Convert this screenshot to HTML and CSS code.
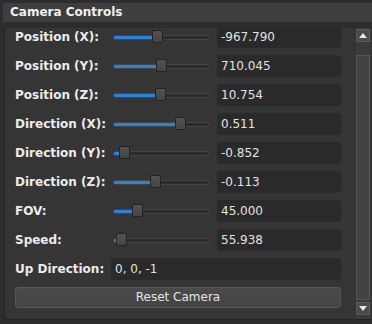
FILE: index.html
```html
<!DOCTYPE html>
<html>
<head>
<meta charset="utf-8">
<link rel="stylesheet" href="styles.css">
</head>
<body>
<div class="dock">
  <div class="title">Camera Controls</div>
  <div class="frame">
    <div class="viewport">
      <div class="content">
        <div class="row">
          <div class="label">Position (X):</div>
          <div class="slider"><div class="groove"><div class="fill" style="width:44px"></div></div><div class="handle" style="left:41px"></div></div>
          <div class="field">-967.790</div>
        </div>
        <div class="row">
          <div class="label">Position (Y):</div>
          <div class="slider"><div class="groove"><div class="fill" style="width:48px"></div></div><div class="handle" style="left:45px"></div></div>
          <div class="field">710.045</div>
        </div>
        <div class="row">
          <div class="label">Position (Z):</div>
          <div class="slider"><div class="groove"><div class="fill" style="width:47px"></div></div><div class="handle" style="left:44px"></div></div>
          <div class="field">10.754</div>
        </div>
        <div class="row">
          <div class="label">Direction (X):</div>
          <div class="slider"><div class="groove"><div class="fill" style="width:67px"></div></div><div class="handle" style="left:64px"></div></div>
          <div class="field">0.511</div>
        </div>
        <div class="row">
          <div class="label">Direction (Y):</div>
          <div class="slider"><div class="groove"><div class="fill" style="width:11px"></div></div><div class="handle" style="left:8px"></div></div>
          <div class="field">-0.852</div>
        </div>
        <div class="row">
          <div class="label">Direction (Z):</div>
          <div class="slider"><div class="groove"><div class="fill" style="width:42px"></div></div><div class="handle" style="left:39px"></div></div>
          <div class="field">-0.113</div>
        </div>
        <div class="row">
          <div class="label">FOV:</div>
          <div class="slider"><div class="groove"><div class="fill" style="width:24px"></div></div><div class="handle" style="left:21px"></div></div>
          <div class="field">45.000</div>
        </div>
        <div class="row">
          <div class="label">Speed:</div>
          <div class="slider"><div class="groove"><div class="fill" style="width:8px"></div></div><div class="handle" style="left:5px"></div></div>
          <div class="field">55.938</div>
        </div>
        <div class="row">
          <div class="label">Up Direction:</div>
          <div class="field wide">0, 0, -1</div>
        </div>
        <div class="button">Reset Camera</div>
      </div>
    </div>
    <div class="scrollbar">
      <div class="sb-btn"><svg width="8" height="5" viewBox="0 0 8 5"><path d="M0 5 L4 0 L8 5 Z" fill="#e8e8e8"/></svg></div>
      <div class="sb-track"><div class="sb-handle"></div></div>
      <div class="sb-btn"><svg width="8" height="5" viewBox="0 0 8 5"><path d="M0 0 L4 5 L8 0 Z" fill="#e8e8e8"/></svg></div>
    </div>
  </div>
</div>
</body>
</html>
```

FILE: styles.css
```css
html, body {
  margin: 0;
  padding: 0;
}
body {
  background: #2d2d2d;
  width: 372px;
  height: 324px;
  overflow: hidden;
  font-family: "DejaVu Sans", sans-serif;
  font-size: 12px;
  color: #e8e8e8;
}
.dock {
  padding-top: 3px;
  display: flex;
  flex-direction: column;
}
.title {
  margin-left: 3px;
  height: 19px;
  line-height: 19px;
  background: #3e3e3e;
  padding-left: 7px;
  font-weight: bold;
  color: #f0f0f0;
}
.frame {
  margin-top: 6px;
  margin-left: 4px;
  width: 380px;
  height: 291px;
  border: 1px solid #242424;
  border-top: none;
  background: #353535;
  display: flex;
}
.viewport {
  width: 347px;
  height: 291px;
  overflow: hidden;
}
.content {
  margin-top: -2px;
  padding-left: 10px;
  display: flex;
  flex-direction: column;
  gap: 7px;
}
.row {
  display: grid;
  grid-template-columns: 90px 100px 124px;
  column-gap: 6px;
  align-items: center;
  height: 22px;
}
.label {
  font-weight: bold;
  color: #ececec;
  white-space: nowrap;
}
.slider {
  position: relative;
  height: 22px;
}
.groove {
  position: absolute;
  left: 2px;
  right: 2px;
  top: 9px;
  height: 3px;
  border: 1px solid #454545;
  background: #2b2b2b;
  border-radius: 2px;
  overflow: hidden;
}
.fill {
  height: 100%;
  background: #2a82da;
}
.handle {
  position: absolute;
  top: 4px;
  width: 9px;
  height: 11px;
  border: 1px solid #232323;
  border-radius: 2px;
  background: linear-gradient(#525252, #454545);
}
.field {
  height: 22px;
  line-height: 22px;
  background: #2a2a2a;
  border-radius: 3px;
  padding-left: 4px;
  color: #e2e2e2;
  box-sizing: border-box;
}
.field.wide {
  grid-column: 2 / 4;
}
.button {
  height: 21px;
  width: 326px;
  box-sizing: border-box;
  border: 1px solid #575757;
  border-radius: 3px;
  background: linear-gradient(#4a4a4a, #444444);
  text-align: center;
  line-height: 19px;
  color: #e4e4e4;
}
.scrollbar {
  margin-left: 4px;
  width: 14px;
  height: 291px;
  display: flex;
  flex-direction: column;
  background: #3a3a3a;
  box-sizing: border-box;
  padding: 1px 0 4px;
}
.sb-btn {
  height: 13px;
  box-sizing: border-box;
  border: 1px solid #5a5a5a;
  background: #4a4a4a;
  display: flex;
  align-items: center;
  justify-content: center;
}
.sb-track {
  flex: 1;
  padding: 13px 0 2px;
  display: flex;
}
.sb-handle {
  flex: 1;
  border: 1px solid #555555;
  background: #424242;
}
```
